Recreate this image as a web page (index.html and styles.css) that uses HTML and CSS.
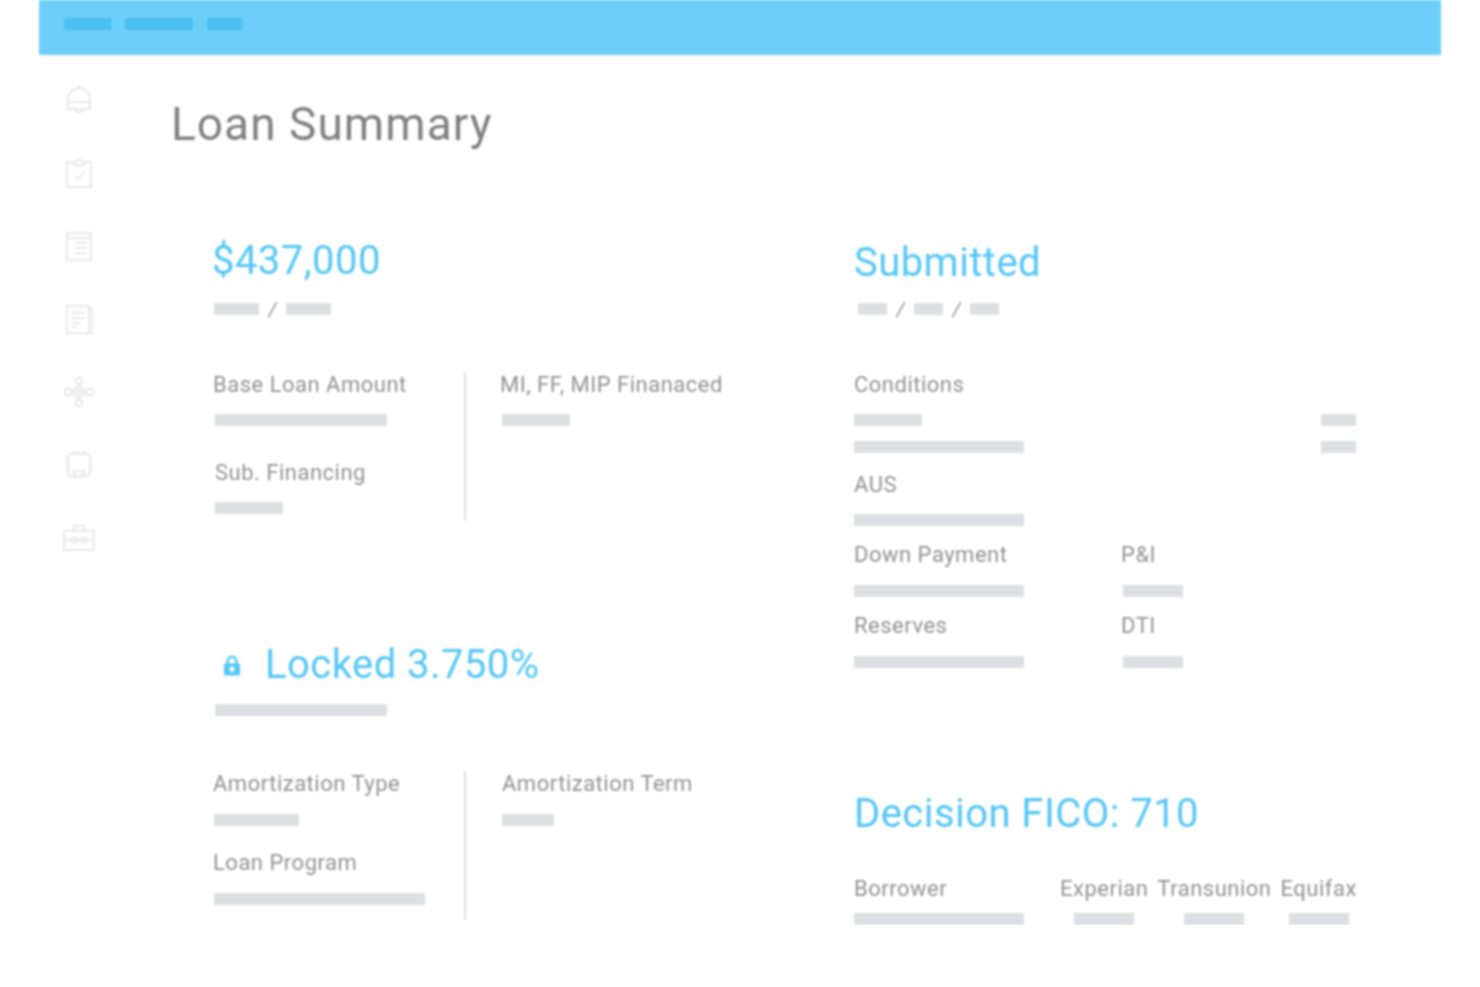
FILE: index.html
```html
<!doctype html>
<html lang="en">
<head>
    <meta charset="UTF-8">
    <title>Loan Summary</title>
    <link rel="stylesheet" href="styles.css">
</head>
<body>
<div class="app">
    <div class="topbar">
        <span class="top-bar w-47"></span>
        <span class="top-bar w-68"></span>
        <span class="top-bar w-35"></span>
    </div>
    <div class="main">
        <ul class="sidebar">
            <li><svg class="side-icon" viewBox="0 0 32 32"><path d="M5 25V15a11 11 0 0 1 22 0v10zM5 18h22M16 4V1M11 25a5.500 5.500 0 0 0 10 0"/></svg></li>
            <li><svg class="side-icon" viewBox="0 0 32 32"><path d="M11 5H4v25h24V5h-7M11 8V5l3-1 2-2 2 2 3 1v3zM12 19l3 3 6-7"/></svg></li>
            <li><svg class="side-icon" viewBox="0 0 32 32"><path d="M4 3h24v27H4zM4 8h24M9 13h1M13 13h11M9 18h1M13 18h11M9 23h1M13 23h11"/></svg></li>
            <li><svg class="side-icon" viewBox="0 0 32 32"><path d="M4 3h22v27H4zM26 6h3v24h-3M8 10h14M8 15h14M8 20h10M8 24h6"/></svg></li>
            <li><svg class="side-icon" viewBox="0 0 32 32"><path d="M16 9l7 7-7 7-7-7zM16 13l3 3-3 3-3-3z"/><circle cx="16" cy="5" r="3.500"/><circle cx="16" cy="27" r="3.500"/><circle cx="5" cy="16" r="3.500"/><circle cx="27" cy="16" r="3.500"/></svg></li>
            <li><svg class="side-icon" viewBox="0 0 32 32"><path d="M7 5h18l2 2v18l-2 2H7l-2-2V7zM11 27v-5h10v5M11 5V2M16 5V2M21 5V2M5 11H3M5 16H3M5 21H3M27 11h2M27 16h2M27 21h2M13 27v3M19 27v3"/></svg></li>
            <li><svg class="side-icon" viewBox="0 0 32 32"><path d="M1 9h30v19H1zM11 9V4h10v5M1 18h8M13 18h6M23 18h8M9 16h4v4H9zM19 16h4v4h-4z"/></svg></li>
        </ul>
        <div class="content">
            <h1 class="page-title">Loan Summary</h1>
            <div class="columns">
                <div class="col-left">
                    <h2 class="big-num pull-1">$437,000</h2>
                    <div class="crumbs">
                        <span class="bar w-45"></span><i class="slash">/</i><span class="bar w-45"></span>
                    </div>
                    <div class="split">
                        <div class="split-left">
                            <div class="label">Base Loan Amount</div>
                            <div class="bar w-172 nudge"></div>
                            <div class="label next nudge">Sub. Financing</div>
                            <div class="bar w-68 nudge"></div>
                        </div>
                        <div class="split-right">
                            <div class="label pull">MI, FF, MIP Finanaced</div>
                            <div class="bar w-68"></div>
                        </div>
                    </div>
                    <div class="locked">
                        <svg class="lock" viewBox="0 0 16 20"><path d="M8 0a5.500 5.500 0 0 0-5.500 5.500V8H1a1 1 0 0 0-1 1v10a1 1 0 0 0 1 1h14a1 1 0 0 0 1-1V9a1 1 0 0 0-1-1h-1.500V5.500A5.500 5.500 0 0 0 8 0zm0 2.500a3 3 0 0 1 3 3V8H5V5.500a3 3 0 0 1 3-3zM8 11a2.500 2.500 0 0 1 1 4.800V17H7v-1.200A2.500 2.500 0 0 1 8 11z"/></svg>
                        <h2 class="big-num">Locked 3.750%</h2>
                    </div>
                    <div class="bar w-172 nudge locked-bar"></div>
                    <div class="split split-two">
                        <div class="split-left">
                            <div class="label">Amortization Type</div>
                            <div class="bar w-85 nudge-1"></div>
                            <div class="label next-short">Loan Program</div>
                            <div class="bar w-211 nudge-1"></div>
                        </div>
                        <div class="split-right">
                            <div class="label">Amortization Term</div>
                            <div class="bar w-52"></div>
                        </div>
                    </div>
                </div>
                <div class="col-right">
                    <h2 class="big-num">Submitted</h2>
                    <div class="crumbs crumbs-right">
                        <span class="bar w-29"></span><i class="slash">/</i><span class="bar w-29"></span><i class="slash">/</i><span class="bar w-29"></span>
                    </div>
                    <div class="label">Conditions</div>
                    <div class="spread">
                        <span class="bar w-68"></span><span class="bar w-35"></span>
                    </div>
                    <div class="spread second">
                        <span class="bar w-170"></span><span class="bar w-35"></span>
                    </div>
                    <div class="label aus">AUS</div>
                    <div class="bar w-170"></div>
                    <div class="pair">
                        <div>
                            <div class="label">Down Payment</div>
                            <div class="bar w-170"></div>
                        </div>
                        <div>
                            <div class="label">P&amp;I</div>
                            <div class="bar w-60 nudge"></div>
                        </div>
                        <div>
                            <div class="label">Reserves</div>
                            <div class="bar w-170"></div>
                        </div>
                        <div>
                            <div class="label">DTI</div>
                            <div class="bar w-60 nudge"></div>
                        </div>
                    </div>
                    <h2 class="big-num fico">Decision FICO: 710</h2>
                    <div class="scores">
                        <div class="score-main">
                            <div class="label">Borrower</div>
                            <div class="bar w-170"></div>
                        </div>
                        <div class="score">
                            <div class="label">Experian</div>
                            <div class="bar w-60"></div>
                        </div>
                        <div class="score">
                            <div class="label">Transunion</div>
                            <div class="bar w-60"></div>
                        </div>
                        <div class="score">
                            <div class="label">Equifax</div>
                            <div class="bar w-60"></div>
                        </div>
                    </div>
                </div>
            </div>
        </div>
    </div>
</div>
</body>
</html>
```

FILE: styles.css
```css
/*reset*/
body, h1, h2, ul, li {
    margin: 0;
    padding: 0;
}
ul {
    list-style: none;
}
/*/reset*/
body {
    background-color: #fff;
    font-family: Roboto, "Liberation Sans", sans-serif;
    color: #929292;
    overflow: hidden;
}
.app {
    width: 1402px;
    margin-left: 39px;
    filter: blur(0.8px);
}
.topbar {
    height: 55px;
    background-color: #6ccef9;
    display: flex;
    align-items: center;
    gap: 14px;
    padding-left: 25px;
    box-sizing: border-box;
    padding-bottom: 7px;
}
.top-bar {
    display: block;
    height: 12px;
    background-color: #4cbff3;
}
.main {
    display: flex;
}
.sidebar {
    width: 133px;
    flex-shrink: 0;
    padding: 29px 24px 0;
    box-sizing: border-box;
    display: flex;
    flex-direction: column;
    gap: 41px;
}
.sidebar li {
    height: 32px;
}
.side-icon {
    display: block;
    width: 32px;
    height: 32px;
    fill: none;
    stroke: #e2e2e2;
    stroke-width: 1.5;
}
.content {
    flex: 1;
}
.page-title {
    font-size: 46px;
    line-height: 60px;
    font-weight: 400;
    letter-spacing: 1.05px;
    color: #808080;
    margin-top: 39px;
    margin-left: -1px;
}
.columns {
    display: flex;
    margin-top: 85px;
    padding-left: 41px;
}
.col-left {
    width: 641px;
    flex-shrink: 0;
}
.col-right {
    width: 502px;
    padding-top: 2px;
}
.big-num {
    font-size: 40px;
    line-height: 44px;
    font-weight: 400;
    letter-spacing: 0.45px;
    color: #55c6f6;
}
.pull-1 {
    margin-left: -1px;
}
.crumbs {
    display: flex;
    align-items: center;
    height: 12px;
    margin-top: 20px;
    margin-bottom: 57px;
    padding-left: 1px;
    gap: 8px;
}
.crumbs-right {
    margin-top: 18px;
    padding-left: 4px;
}
.slash {
    width: 11px;
    font-size: 20px;
    line-height: 12px;
    text-align: center;
}
.label {
    font-size: 22px;
    line-height: 26px;
    letter-spacing: 0.5px;
    white-space: nowrap;
}
.bar {
    display: block;
    height: 12px;
    background-color: #dedfe2;
    margin-top: 16px;
}
.crumbs .bar, .spread .bar {
    margin-top: 0;
}
.nudge {
    margin-left: 2px;
}
.nudge-1 {
    margin-left: 1px;
}
.pull {
    margin-left: -2px;
}
.split {
    display: flex;
    height: 149px;
}
.split-left {
    width: 251px;
    border-right: 2px solid #dedfe2;
}
.split-right {
    padding-left: 36px;
}
.next {
    margin-top: 34px;
}
.next-short {
    margin-top: 24px;
}
.locked {
    display: flex;
    align-items: center;
    margin-top: 122px;
}
.lock {
    width: 16px;
    height: 21px;
    fill: #55c6f6;
    margin-left: 11px;
    margin-right: 25px;
}
.locked-bar {
    margin-top: 17px;
}
.split-two {
    margin-top: 55px;
}
.split-two .bar {
    margin-top: 17px;
}
.spread {
    display: flex;
    justify-content: space-between;
    margin-top: 16px;
}
.spread.second {
    margin-top: 15px;
}
.aus {
    margin-top: 19px;
}
.pair {
    display: grid;
    grid-template-columns: 267px 1fr;
    row-gap: 16px;
    margin-top: 16px;
}
.pair .bar {
    margin-top: 17px;
}
.fico {
    margin-top: 124px;
}
.scores {
    display: flex;
    margin-top: 40px;
    gap: 9px;
}
.score-main {
    width: 197px;
    flex-shrink: 0;
}
.score {
    display: flex;
    flex-direction: column;
    align-items: center;
}
.scores .bar {
    margin-top: 11px;
}
.w-29 { width: 29px; }
.w-35 { width: 35px; }
.w-45 { width: 45px; }
.w-47 { width: 47px; }
.w-52 { width: 52px; }
.w-60 { width: 60px; }
.w-68 { width: 68px; }
.w-85 { width: 85px; }
.w-170 { width: 170px; }
.w-172 { width: 172px; }
.w-211 { width: 211px; }
```
